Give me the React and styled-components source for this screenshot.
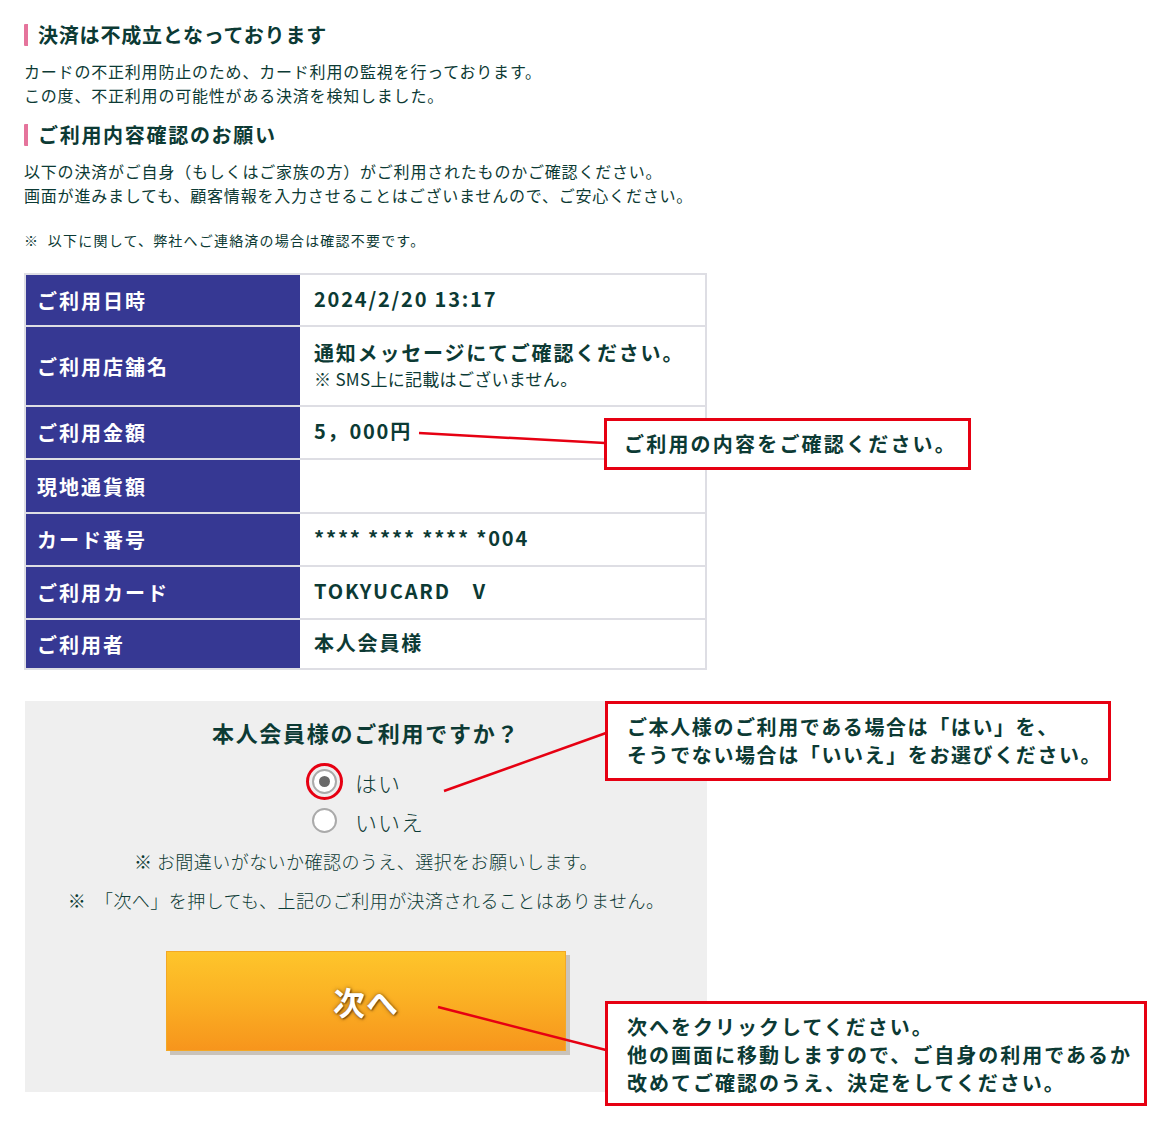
import React from 'react';
import styled, { createGlobalStyle, css } from 'styled-components';

const TEXT = '#0c3a34';
const RED = '#e60012';

const rows = [
  { label: 'ご利用日時', value: '2024/2/20 13:17', height: 50 },
  {
    label: 'ご利用店舗名',
    value: '通知メッセージにてご確認ください。',
    sub: '※ SMS上に記載はございません。',
    height: 78,
  },
  { label: 'ご利用金額', value: '5，000円', height: 51 },
  { label: '現地通貨額', value: '', height: 52 },
  { label: 'カード番号', value: '**** **** **** *004', height: 51 },
  { label: 'ご利用カード', value: 'TOKYUCARD\u3000V', height: 51 },
  { label: 'ご利用者', value: '本人会員様', height: 48 },
];

const App = () => {
  const [answer, setAnswer] = React.useState('yes');

  return (
    <Page>
      <GlobalStyle />
      <Column>
        <Heading>決済は不成立となっております</Heading>
        <Body>
          カードの不正利用防止のため、カード利用の監視を行っております。
          <br />
          この度、不正利用の可能性がある決済を検知しました。
        </Body>

        <Heading $spacing={1.7}>ご利用内容確認のお願い</Heading>
        <Body>
          以下の決済がご自身（もしくはご家族の方）がご利用されたものかご確認ください。
          <br />
          画面が進みましても、顧客情報を入力させることはございませんので、ご安心ください。
        </Body>
        <Note>※&nbsp;&nbsp;以下に関して、弊社へご連絡済の場合は確認不要です。</Note>

        <Table>
          {rows.map((row) => (
            <React.Fragment key={row.label}>
              <LabelCell $height={row.height}>{row.label}</LabelCell>
              <ValueCell $height={row.height}>
                <span>{row.value}</span>
                {row.sub && <SubValue>{row.sub}</SubValue>}
              </ValueCell>
            </React.Fragment>
          ))}
        </Table>

        <Panel>
          <Question>本人会員様のご利用ですか？</Question>
          <RadioGroup>
            <RadioRow onClick={() => setAnswer('yes')}>
              <Radio $checked={answer === 'yes'} $marked />
              はい
            </RadioRow>
            <RadioRow onClick={() => setAnswer('no')}>
              <Radio $checked={answer === 'no'} />
              いいえ
            </RadioRow>
          </RadioGroup>
          <PanelNote>※ お間違いがないか確認のうえ、選択をお願いします。</PanelNote>
          <PanelNote>※&nbsp;&nbsp;「次へ」を押しても、上記のご利用が決済されることはありません。</PanelNote>
          <NextButton type="button">次へ</NextButton>
        </Panel>
      </Column>

      <Pointers width="1170" height="1132" viewBox="0 0 1170 1132">
        <line x1="419" y1="433" x2="605" y2="443" />
        <line x1="444" y1="791" x2="606" y2="733" />
        <line x1="438" y1="1007" x2="606" y2="1050" />
      </Pointers>

      <Callout $left={604} $top={418} $width={367} $height={52} $center $spacing={2.2}>
        ご利用の内容をご確認ください。
      </Callout>
      <Callout $left={605} $top={701} $width={506} $height={80} $spacing={1.6}>
        ご本人様のご利用である場合は「はい」を、
        <br />
        そうでない場合は「いいえ」をお選びください。
      </Callout>
      <Callout $left={605} $top={1001} $width={542} $height={105} $spacing={2}>
        次へをクリックしてください。
        <br />
        他の画面に移動しますので、ご自身の利用であるか
        <br />
        改めてご確認のうえ、決定をしてください。
      </Callout>
    </Page>
  );
};

const GlobalStyle = createGlobalStyle`
  html, body {
    margin: 0;
    padding: 0;
    background: #fff;
  }
  body {
    font-family: "Noto Sans CJK JP", "Noto Sans", sans-serif;
    color: ${TEXT};
  }
`;

const Page = styled.div`
  position: relative;
  width: 1170px;
  min-height: 1132px;
  padding: 24px 0 0 24px;
  box-sizing: border-box;
`;

const Column = styled.div`
  width: 683px;
`;

const Heading = styled.h2`
  margin: 0;
  padding-left: 10px;
  border-left: 4px solid #e5749c;
  border-radius: 1px;
  font-size: 20px;
  font-weight: 700;
  line-height: 22px;
  letter-spacing: ${(p) => p.$spacing ?? 0.8}px;
`;

const Body = styled.p`
  margin: 13px 0 17px;
  font-size: 16px;
  line-height: 24px;
  letter-spacing: 0.8px;
`;

const Note = styled.p`
  margin: 23px 0 23px;
  font-size: 14px;
  line-height: 20px;
  letter-spacing: 1.2px;
`;

const Table = styled.div`
  display: grid;
  grid-template-columns: 274px 1fr;
  row-gap: 2px;
  padding: 2px;
  background: #dedee4;
`;

const cell = css`
  display: flex;
  flex-direction: column;
  justify-content: center;
  height: ${(p) => p.$height}px;
  box-sizing: border-box;
  font-size: 20px;
  font-weight: 700;
`;

const LabelCell = styled.div`
  ${cell}
  padding-left: 11px;
  background: #363893;
  color: #fff;
  letter-spacing: 2px;
`;

const ValueCell = styled.div`
  ${cell}
  padding: 0 0 3px 14px;
  background: #fff;
  line-height: 28px;
  letter-spacing: 1.8px;
`;

const SubValue = styled.span`
  font-size: 17px;
  font-weight: 400;
  letter-spacing: 0.3px;
  line-height: 24px;
`;

const Panel = styled.section`
  margin: 31px 0 0 1px;
  padding: 16px 0 41px;
  background: #efefef;
  display: flex;
  flex-direction: column;
  align-items: center;
`;

const Question = styled.h3`
  margin: 0;
  font-size: 22px;
  font-weight: 700;
  line-height: 30px;
  letter-spacing: 1.7px;
`;

const RadioGroup = styled.div`
  margin: 15px 0 0 4px;
  display: flex;
  flex-direction: column;
  align-items: flex-start;
`;

const RadioRow = styled.label`
  display: flex;
  align-items: center;
  gap: 18px;
  height: 39px;
  font-size: 22px;
  font-weight: 300;
  letter-spacing: 1px;
  cursor: pointer;
`;

const Radio = styled.span`
  position: relative;
  width: 25px;
  height: 25px;
  box-sizing: border-box;
  border-radius: 50%;
  border: 2px solid #aaa;
  background: #fff;
  flex-shrink: 0;

  &::before {
    content: '';
    display: ${(p) => (p.$checked ? 'block' : 'none')};
    position: absolute;
    left: 50%;
    top: 50%;
    width: 11px;
    height: 11px;
    margin: -5.5px 0 0 -5.5px;
    border-radius: 50%;
    background: #6a6a6a;
  }

  &::after {
    content: '';
    display: ${(p) => (p.$marked ? 'block' : 'none')};
    position: absolute;
    left: -8px;
    top: -8px;
    width: 37px;
    height: 37px;
    box-sizing: border-box;
    border-radius: 50%;
    border: 3px solid ${RED};
  }
`;

const PanelNote = styled.p`
  margin: 0;
  font-size: 18px;
  font-weight: 300;
  line-height: 39px;
  letter-spacing: 0.45px;
  &:first-of-type {
    margin-top: 2px;
  }
`;

const NextButton = styled.button`
  margin-top: 31px;
  width: 400px;
  height: 100px;
  border: 1px solid #f3a826;
  background: linear-gradient(to bottom, #fec52b 0%, #fbb224 45%, #f7951c 100%);
  box-shadow: 4px 4px 0 #c9c3bb;
  color: #fff;
  font-family: "Noto Sans CJK JP", sans-serif;
  font-size: 32px;
  font-weight: 700;
  letter-spacing: 1px;
  text-shadow: 1px 1px 2px rgba(60, 30, 0, 0.7), 0 0 4px rgba(60, 30, 0, 0.5);
  cursor: pointer;
`;

const Pointers = styled.svg`
  position: absolute;
  left: 0;
  top: 0;
  pointer-events: none;
  line {
    stroke: ${RED};
    stroke-width: 2.5;
  }
`;

const Callout = styled.div`
  position: absolute;
  left: ${(p) => p.$left}px;
  top: ${(p) => p.$top}px;
  width: ${(p) => p.$width}px;
  height: ${(p) => p.$height}px;
  box-sizing: border-box;
  border: 3px solid ${RED};
  background: #fff;
  padding: ${(p) => (p.$center ? '0 0 0 6px' : '9px 0 0 19px')};
  display: ${(p) => (p.$center ? 'flex' : 'block')};
  align-items: center;
  justify-content: center;
  font-size: 20px;
  font-weight: 700;
  line-height: 28px;
  letter-spacing: ${(p) => p.$spacing ?? 1.3}px;
`;

export default App;
